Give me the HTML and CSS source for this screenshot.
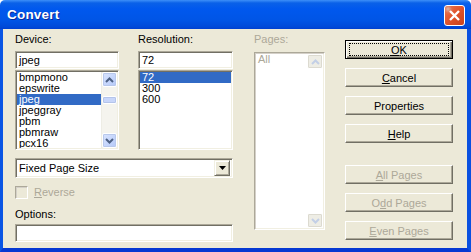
FILE: index.html
```html
<!DOCTYPE html>
<html lang="en">
<head>
  <meta charset="UTF-8" />
  <title>Convert</title>
  <link rel="stylesheet" href="styles.css">
</head>
<body>
  <div class="window">
    <div class="titlebar">
      <span class="title">Convert</span>
      <span class="close">
        <svg width="11" height="11" viewBox="0 0 11 11">
          <path d="M1 1 L10 10 M10 1 L1 10" stroke="#fff" stroke-width="2.4" fill="none" />
        </svg>
      </span>
    </div>

    <div class="client">
      <div class="left">
        <div class="lists">
          <div class="col col-device">
            <div class="lbl">Device:</div>
            <div class="edit">jpeg</div>
            <div class="listbox">
              <ul class="items">
                <li>bmpmono</li>
                <li>epswrite</li>
                <li class="sel">jpeg</li>
                <li>jpeggray</li>
                <li>pbm</li>
                <li>pbmraw</li>
                <li>pcx16</li>
              </ul>
              <div class="vscroll">
                <span class="sbtn">
                  <svg width="9" height="6" viewBox="0 0 9 6"><path d="M1 5 L4.5 1.5 L8 5" stroke="#4d6185" stroke-width="2" fill="none" /></svg>
                </span>
                <span class="track"><span class="thumb"></span></span>
                <span class="sbtn">
                  <svg width="9" height="6" viewBox="0 0 9 6"><path d="M1 1 L4.5 4.5 L8 1" stroke="#4d6185" stroke-width="2" fill="none" /></svg>
                </span>
              </div>
            </div>
          </div>

          <div class="col col-res">
            <div class="lbl">Resolution:</div>
            <div class="edit">72</div>
            <div class="listbox">
              <ul class="items">
                <li class="sel">72</li>
                <li>300</li>
                <li>600</li>
              </ul>
            </div>
          </div>
        </div>

        <div class="combo">
          <span class="combo-text">Fixed Page Size</span>
          <span class="combo-btn">
            <svg width="7" height="4" viewBox="0 0 7 4"><path d="M0 0 H7 L3.5 4 Z" fill="#000" /></svg>
          </span>
        </div>

        <div class="check">
          <span class="box"></span>
          <span class="check-lbl"><u>R</u>everse</span>
        </div>

        <div class="lbl lbl-options">Options:</div>
        <div class="edit"></div>
      </div>

      <div class="pages">
        <div class="lbl disabled">Pages:</div>
        <div class="listbox listbox-off">
          <ul class="items">
            <li>All</li>
          </ul>
          <div class="vscroll">
            <span class="sbtn">
              <svg width="9" height="6" viewBox="0 0 9 6"><path d="M1 5 L4.5 1.5 L8 5" stroke="#c3cfe6" stroke-width="2" fill="none" /></svg>
            </span>
            <span class="track"></span>
            <span class="sbtn">
              <svg width="9" height="6" viewBox="0 0 9 6"><path d="M1 1 L4.5 4.5 L8 1" stroke="#c3cfe6" stroke-width="2" fill="none" /></svg>
            </span>
          </div>
        </div>
      </div>

      <div class="buttons">
        <div class="btn-group">
          <button class="btn btn-default"><u>O</u>K</button>
          <button class="btn"><u>C</u>ancel</button>
          <button class="btn">Properties</button>
          <button class="btn"><u>H</u>elp</button>
        </div>
        <div class="btn-group btn-group-pages">
          <button class="btn" disabled><u>A</u>ll Pages</button>
          <button class="btn" disabled>O<u>d</u>d Pages</button>
          <button class="btn" disabled><u>E</u>ven Pages</button>
        </div>
      </div>
    </div>
  </div>
</body>
</html>
```

FILE: styles.css
```css
/* base */
* {
  box-sizing: border-box;
}
body {
  margin: 0;
  background: #fff;
  font-family: "Liberation Sans", Arial, sans-serif;
  font-size: 11px;
  color: #000;
}
.window {
  width: 471px;
  height: 252px;
  display: flex;
  flex-direction: column;
}

/* title bar */
.titlebar {
  height: 29px;
  display: flex;
  align-items: flex-start;
  padding: 5px 6px 0 7px;
  background: linear-gradient(to bottom, #3d8ff8 0, #0a61e8 3px, #0058ee 9px, #0055e6 20px, #0049d8 27px, #003fcf 29px);
  border-radius: 5px 5px 0 0;
}
.title {
  color: #fff;
  font-weight: 700;
  font-size: 13.5px;
  line-height: 20px;
  letter-spacing: 0.2px;
  text-shadow: 1px 1px #0a2a9c;
}
.close {
  margin-left: auto;
  width: 21px;
  height: 21px;
  border: 1px solid #fff;
  border-radius: 3px;
  background: radial-gradient(circle at 3px 3px, #d9b4a8 0, #e26a47 4px, transparent 6px),
              linear-gradient(135deg, #e8734f 0, #e0532b 50%, #c9421d 100%);
  display: flex;
  align-items: center;
  justify-content: center;
}

/* client area */
.client {
  flex: 1;
  display: flex;
  padding: 4px 0 0 12px;
  background: #ece9d8;
  border-left: 3px solid #0a55e4;
  border-right: 4px solid #0a50e0;
  border-bottom: 4px solid #0638d2;
}
.left {
  width: 218px;
  display: flex;
  flex-direction: column;
}
.lists {
  display: flex;
  gap: 19px;
}
.col {
  display: flex;
  flex-direction: column;
}
.col-device {
  width: 104px;
}
.col-res {
  width: 95px;
}
.lbl {
  height: 13px;
  line-height: 13px;
  white-space: nowrap;
}
.lbl.disabled {
  color: #aca899;
}

/* sunken boxes */
.edit,
.listbox,
.combo {
  background: #fff;
  border: 1px solid;
  border-color: #aca899 #fff #fff #aca899;
  box-shadow: inset 1px 1px #716f64, inset -1px -1px #f1efe2;
}
.edit {
  height: 18px;
  line-height: 16px;
  padding: 0 3px;
}
.col .edit {
  margin-top: 5px;
}
.listbox {
  margin-top: 1px;
  height: 80px;
  display: flex;
  padding: 1px;
  overflow: hidden;
}
.items {
  list-style: none;
  margin: 0;
  padding: 0;
  flex: 1;
  overflow: hidden;
}
.items li {
  height: 11px;
  line-height: 11px;
  padding-left: 2px;
  white-space: nowrap;
}
.items li.sel {
  background: #316ac5;
  color: #fff;
}

/* themed scrollbar */
.vscroll {
  width: 16px;
  display: flex;
  flex-direction: column;
  background: #f5f4ee;
  border-left: 1px solid #eeede5;
}
.sbtn {
  height: 15px;
  display: flex;
  align-items: center;
  justify-content: center;
  background: linear-gradient(135deg, #d9e4fd 0, #c3d4fc 60%, #b4c8f6 100%);
  border: 1px solid #fff;
  border-radius: 2px;
  box-shadow: 0 0 0 1px #b8c8ec inset;
}
.track {
  flex: 1;
  display: flex;
  flex-direction: column;
  padding-top: 9px;
}
.thumb {
  height: 8px;
  background: #c8d6fa;
  border: 1px solid #fff;
  border-radius: 2px;
  box-shadow: 0 0 0 1px #b4c4ea inset;
}

/* combo */
.combo {
  margin-top: 8px;
  height: 20px;
  display: flex;
  align-items: center;
  padding: 2px 2px 2px 3px;
}
.combo-text {
  flex: 1;
}
.combo-btn {
  width: 16px;
  height: 16px;
  display: flex;
  align-items: center;
  justify-content: center;
  background: #ece9d8;
  border: 1px solid;
  border-color: #f1efe2 #716f64 #716f64 #f1efe2;
  box-shadow: inset 1px 1px #fff, inset -1px -1px #aca899;
}

/* checkbox */
.check {
  margin-top: 8px;
  height: 13px;
  display: flex;
  align-items: center;
  gap: 6px;
}
.box {
  width: 13px;
  height: 13px;
  background: #ece9d8;
  border: 1px solid;
  border-color: #aca899 #fff #fff #aca899;
  box-shadow: inset 1px 1px #d4d0c8;
}
.check-lbl {
  color: #aca899;
  line-height: 13px;
}
.lbl-options {
  margin-top: 9px;
  margin-bottom: 3px;
}

/* pages */
.pages {
  width: 71px;
  margin-left: 21px;
  display: flex;
  flex-direction: column;
}
.pages .listbox {
  margin-top: 6px;
  height: 178px;
}
.listbox-off {
  border-color: #aca899 #fff #fff #aca899;
  box-shadow: inset 1px 1px #d4d0c8, inset -1px -1px #f1efe2;
}
.listbox-off .items li {
  color: #aca899;
}
.listbox-off .vscroll {
  background: #fff;
  border-left: none;
}
.listbox-off .sbtn {
  background: #eeede5;
  box-shadow: 0 0 0 1px #dcdad0 inset;
}

/* buttons */
.buttons {
  width: 108px;
  margin-left: 20px;
  padding-top: 7px;
  display: flex;
  flex-direction: column;
}
.btn-group {
  display: flex;
  flex-direction: column;
  gap: 9px;
}
.btn-group-pages {
  margin-top: 22px;
}
.btn {
  position: relative;
  height: 19px;
  padding: 0;
  font-family: inherit;
  font-size: 11px;
  color: #000;
  background: #ece9d8;
  border: 1px solid;
  border-color: #fff #716f64 #716f64 #fff;
  box-shadow: inset -1px -1px #aca899;
}
.btn:disabled {
  color: #aca899;
}
.btn-default {
  border-color: #000;
  box-shadow: inset 1px 1px #fff, inset -1px -1px #716f64, inset -2px -2px #aca899;
}
/* focus rectangle */
.btn-default::after {
  content: "";
  position: absolute;
  top: 2px;
  left: 3px;
  right: 3px;
  bottom: 2px;
  border: 1px dotted #000;
}
```
